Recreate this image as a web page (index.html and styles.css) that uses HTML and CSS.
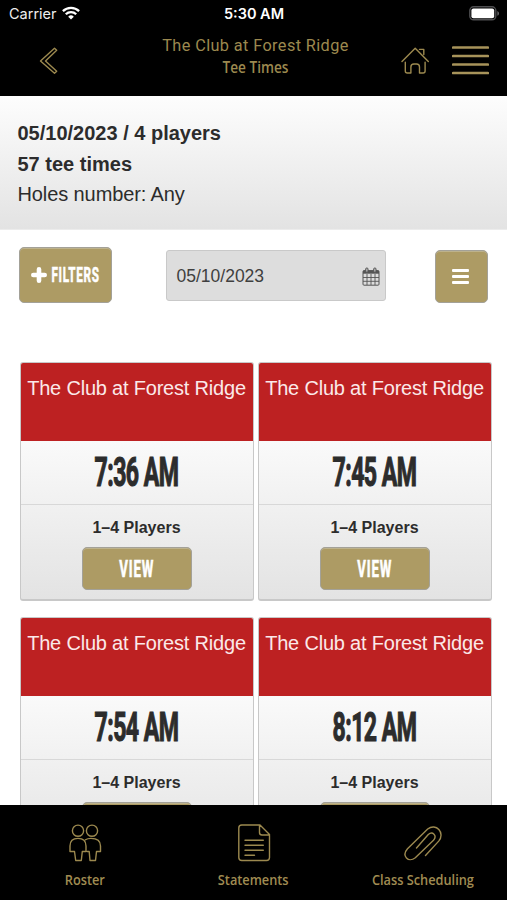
FILE: index.html
```html
<!DOCTYPE html>
<html lang="en">

<head>
    <meta charset="UTF-8">
    <meta name="viewport" content="width=device-width, initial-scale=1.0">
    <title>Tee Times</title>
    <link rel="stylesheet" href="styles.css">
</head>

<body>

    <!-- Status bar -->
    <div class="status-bar">
        <div class="carrier">
            <span>Carrier</span>
            <svg width="18" height="14" viewBox="0 0 18 14" fill="none" stroke="#fff" stroke-width="2.3">
                <path d="M.9 5.1a11.6 11.6 0 0 1 16.2 0M3.8 8.2a7.4 7.4 0 0 1 10.4 0"/>
                <path d="M9 13.6L6.2 10.7a4 4 0 0 1 5.6 0z" fill="#fff" stroke="none"/>
            </svg>
        </div>
        <span class="clock">5:30 AM</span>
        <svg class="battery" width="31" height="15" viewBox="0 0 31 15">
            <rect x=".8" y=".8" width="26" height="13" rx="3.8" fill="none" stroke="#4e4e50" stroke-width="1.4"/>
            <rect x="2.4" y="2.4" width="22.8" height="9.8" rx="2" fill="#fff"/>
            <path d="M28.4 5v4.8q1.6-.8 1.6-2.4t-1.6-2.4z" fill="#6a6a6c"/>
        </svg>
    </div>

    <!-- Header -->
    <header class="header">
        <svg class="back" width="20" height="28" viewBox="0 0 20 28">
            <path d="M15.5 1.2L1.5 14l14 12.3 2.2-2L6.5 14 17.7 3.2z"/>
        </svg>
        <div class="titles">
            <div class="club">The Club at Forest Ridge</div>
            <div class="page"><span>Tee Times</span></div>
        </div>
        <div class="actions">
            <svg width="28" height="28" viewBox="0 0 28 28">
                <path d="M1 14.6L14.2 1.2 27.3 14.6M18.5 2.4h4.3v5.2M4.3 15.3v8.7q0 2 2 2h3.600v-6q0-3 3-3h2.600q3 0 3 3v6h3.600q2 0 2-2v-8.700"/>
            </svg>
            <svg class="burger" width="37" height="30" viewBox="0 0 37 30">
                <path d="M1 1.600h35M1 10.100h35M1 18.600h35M1 27.100h35"/>
            </svg>
        </div>
    </header>

    <main>
        <!-- Search summary -->
        <section class="summary">
            <strong>05/10/2023 / 4 players</strong>
            <strong>57 tee times</strong>
            <span>Holes number: Any</span>
        </section>

        <!-- Toolbar -->
        <section class="toolbar">
            <button class="btn filters">
                <svg width="16" height="16" viewBox="0 0 16 16"><path d="M8 2.300v11.400M2.300 8h11.400" stroke="#fff" stroke-width="4.600" stroke-linecap="round"/></svg>
                <span>FILTERS</span>
            </button>
            <div class="date">
                <span>05/10/2023</span>
                <svg width="18" height="19" viewBox="0 0 18 19" fill="none" stroke="#555">
                    <rect x="1" y="3.6" width="16" height="14.6" rx="1"/>
                    <path d="M1 5.2h16" stroke-width="3"/>
                    <path d="M1 10.5h16M1 14.3h16M5 7v11M9 7v11M13 7v11" stroke-width=".9"/>
                    <rect x="3.7" y="1" width="2.3" height="4.2" rx="1" fill="#bbb"/>
                    <rect x="11.7" y="1" width="2.3" height="4.2" rx="1" fill="#bbb"/>
                </svg>
            </div>
            <button class="btn list"><i></i><i></i><i></i></button>
        </section>

        <!-- Tee times -->
        <section class="cards">
            <article class="card">
                <h2>The Club at Forest Ridge</h2>
                <div class="time"><span>7:36 AM</span></div>
                <div class="slot">
                    <b>1–4 Players</b>
                    <button class="btn view"><span>VIEW</span></button>
                </div>
            </article>
            <article class="card">
                <h2>The Club at Forest Ridge</h2>
                <div class="time"><span>7:45 AM</span></div>
                <div class="slot">
                    <b>1–4 Players</b>
                    <button class="btn view"><span>VIEW</span></button>
                </div>
            </article>
            <article class="card">
                <h2>The Club at Forest Ridge</h2>
                <div class="time"><span>7:54 AM</span></div>
                <div class="slot">
                    <b>1–4 Players</b>
                    <button class="btn view"></button>
                </div>
            </article>
            <article class="card">
                <h2>The Club at Forest Ridge</h2>
                <div class="time"><span>8:12 AM</span></div>
                <div class="slot">
                    <b>1–4 Players</b>
                    <button class="btn view"></button>
                </div>
            </article>
        </section>
    </main>

    <!-- Bottom navigation -->
    <nav class="tabs">
        <a class="tab">
            <svg width="34" height="40" viewBox="0 0 34 40">
                <circle cx="10" cy="7.700" r="5.600"/>
                <circle cx="24" cy="7.700" r="5.600"/>
                <path d="M6.500 28.500H2V23q0-7.600 8-7.600t8 7.600v5.500H14.300l-1 9H7.700zM17.500 16.800q2-1.400 5.500-1.400 9.500 0 9.500 7.600v5.500h-4l-1 9H22l-.8-9h-2"/>
            </svg>
            <span>Roster</span>
        </a>
        <a class="tab">
            <svg width="34" height="40" viewBox="0 0 34 40">
                <path d="M4.800 2H23L32.500 11.500V34.500q0 3-3 3H4.800q-3 0-3-3V5q0-3 3-3zM22.500 2v7.500q0 2.500 2.500 2.500H32.500M8 17.300h18.300M8 22.300h18.300M8 27.300h18.300M8 32.300h9.500"/>
            </svg>
            <span>Statements</span>
        </a>
        <a class="tab">
            <svg width="40" height="40" viewBox="0 0 40 40">
                <path d="M22.500 32.500L35.700 18.100C42.500 10 33-.5 24.700 6L4.500 25.800C-1.800 33 5.500 40.200 12.300 34.700L30.500 17.300C34.500 12.500 29.500 8 25.300 11.500L13.500 25"/>
            </svg>
            <span>Class Scheduling</span>
        </a>
    </nav>

</body>

</html>
```
FILE: styles.css
```css
* {
    box-sizing: border-box;
}

body {
    margin: 0;
    height: 900px;
    display: flex;
    flex-direction: column;
    overflow: hidden;
    background: #fff;
    color: #2c2c2c;
    font-family: "Liberation Sans", Arial, sans-serif;
}

svg {
    display: block;
    flex: none;
}

/* Status bar */
.status-bar {
    height: 28px;
    flex: none;
    display: grid;
    grid-template-columns: 1fr auto 1fr;
    align-items: center;
    padding: 0 7px 0 9px;
    background: #000;
    color: #eee;
    font-family: Inter, sans-serif;
    font-size: 14.5px;
}

.carrier {
    display: flex;
    align-items: center;
    gap: 5px;
    margin-top: -2px;
}

.clock {
    font-weight: 600;
    color: #fff;
    margin-top: -1px;
    margin-left: -1px;
}

.battery {
    justify-self: end;
    margin-top: -2px;
}

/* Header */
.header {
    height: 68px;
    flex: none;
    display: grid;
    grid-template-columns: 124px 1fr 124px;
    background: #000;
    color: #9c894f;
}

.header svg,
.tabs svg {
    fill: none;
    stroke: #9c894f;
    stroke-width: 1.4;
    stroke-linejoin: round;
    stroke-linecap: round;
}

.back {
    margin: 19px 0 0 39px;
}

.titles {
    padding-top: 7px;
    text-align: center;
    white-space: nowrap;
}

.club {
    font-family: Roboto, sans-serif;
    font-size: 16.3px;
    line-height: 22px;
    letter-spacing: .39px;
    margin-right: -4px;
}

.page {
    line-height: 20px;
    font-family: "Open Sans", sans-serif;
    font-size: 15.5px;
    font-weight: 600;
    padding-left: 3px;
}

.page span {
    display: inline-block;
    transform: scaleX(.88);
}

.actions {
    display: flex;
    gap: 23px;
    padding: 19px 0 0 18px;
}

.header .burger {
    margin-top: -1px;
    stroke: #a7935a;
    stroke-width: 2.5;
}

main {
    flex: 1;
    min-height: 0;
    overflow: hidden;
}

/* Search summary */
.summary {
    height: 134px;
    display: flex;
    flex-direction: column;
    padding: 22px 17px 0 17.5px;
    font-size: 20px;
    line-height: 30.7px;
    background: linear-gradient(#fdfdfd, #e3e3e3);
    border-bottom: 1px solid #ececec;
}

.summary span {
    letter-spacing: -.1px;
}

/* Toolbar */
.toolbar {
    height: 132px;
    display: flex;
    align-items: flex-start;
    justify-content: space-between;
    padding: 17px 19px 0;
}

.btn {
    display: flex;
    align-items: center;
    justify-content: center;
    padding: 0;
    border: 1px solid #a3a198;
    border-radius: 5px;
    background: #ad9b64;
    box-shadow: inset 0 1px #bdb28c;
    color: #fff;
    font-family: Roboto, sans-serif;
    font-weight: 700;
}

.filters {
    width: 93px;
    height: 56px;
    gap: 4px;
}

/* the labels are squeezed into a condensed face */
.filters span {
    width: 49px;
    display: flex;
    justify-content: center;
    font-size: 20.5px;
    letter-spacing: 1.2px;
    -webkit-text-stroke: .6px;
    transform: scaleX(.57);
}

.date {
    width: 220px;
    height: 51px;
    margin: 3px 0 0 5px;
    display: flex;
    align-items: center;
    justify-content: space-between;
    padding: 1px 5px 0 9.5px;
    border: 1px solid #c9c9c9;
    border-radius: 3px;
    background: #ddd;
    color: #3f3f3f;
    font-size: 17.5px;
}

.list {
    width: 53px;
    height: 53px;
    margin: 3px 0 0;
    padding: 0 3px 1px 0;
    flex-direction: column;
    gap: 3px;
}

.list i {
    width: 17px;
    height: 3px;
    border-radius: 1px;
    background: #fff;
}

/* Cards */
.cards {
    display: grid;
    grid-template-columns: 234px 234px;
    gap: 16px 4px;
    padding-left: 19.5px;
}

.card {
    height: 239px;
    border: 1px solid #c8c8c8;
    border-bottom-width: 2px;
    border-radius: 3px;
    overflow: hidden;
    background: linear-gradient(#fafafa 78px, #e3e3e3);
    text-align: center;
}

.card h2 {
    height: 78px;
    margin: 0;
    padding-top: 10px;
    background: #bd2122;
    color: #fbe9e9;
    font-size: 20px;
    font-weight: 400;
    line-height: 30px;
    letter-spacing: -.2px;
    white-space: nowrap;
}

.time {
    height: 64px;
    display: flex;
    justify-content: center;
    border-bottom: 1px solid #d8d8d8;
    font-family: Roboto, sans-serif;
    font-size: 40.5px;
    font-weight: 700;
    line-height: 62px;
    white-space: nowrap;
}

.time span {
    letter-spacing: -1px;
    -webkit-text-stroke: 1.2px;
    transform: scaleX(.57);
}

.slot {
    padding-top: 13px;
    font-size: 16px;
}

.slot b {
    display: block;
    line-height: 20px;
}

.view {
    width: 110px;
    height: 43px;
    margin: 9px auto 0;
    font-size: 24px;
}

.view span {
    letter-spacing: 1.6px;
    -webkit-text-stroke: .7px;
    transform: scaleX(.55);
}

/* Bottom navigation */
.tabs {
    height: 95px;
    flex: none;
    display: grid;
    grid-template-columns: repeat(3, 1fr);
    padding-top: 18px;
    background: #000;
    color: #a08c52;
}

.tab {
    display: flex;
    flex-direction: column;
    align-items: center;
    gap: 7px;
    font-family: "Open Sans", sans-serif;
    font-size: 14.5px;
    font-weight: 600;
    line-height: 20px;
    white-space: nowrap;
}

.tab span {
    transform: scaleX(.88);
}
```
